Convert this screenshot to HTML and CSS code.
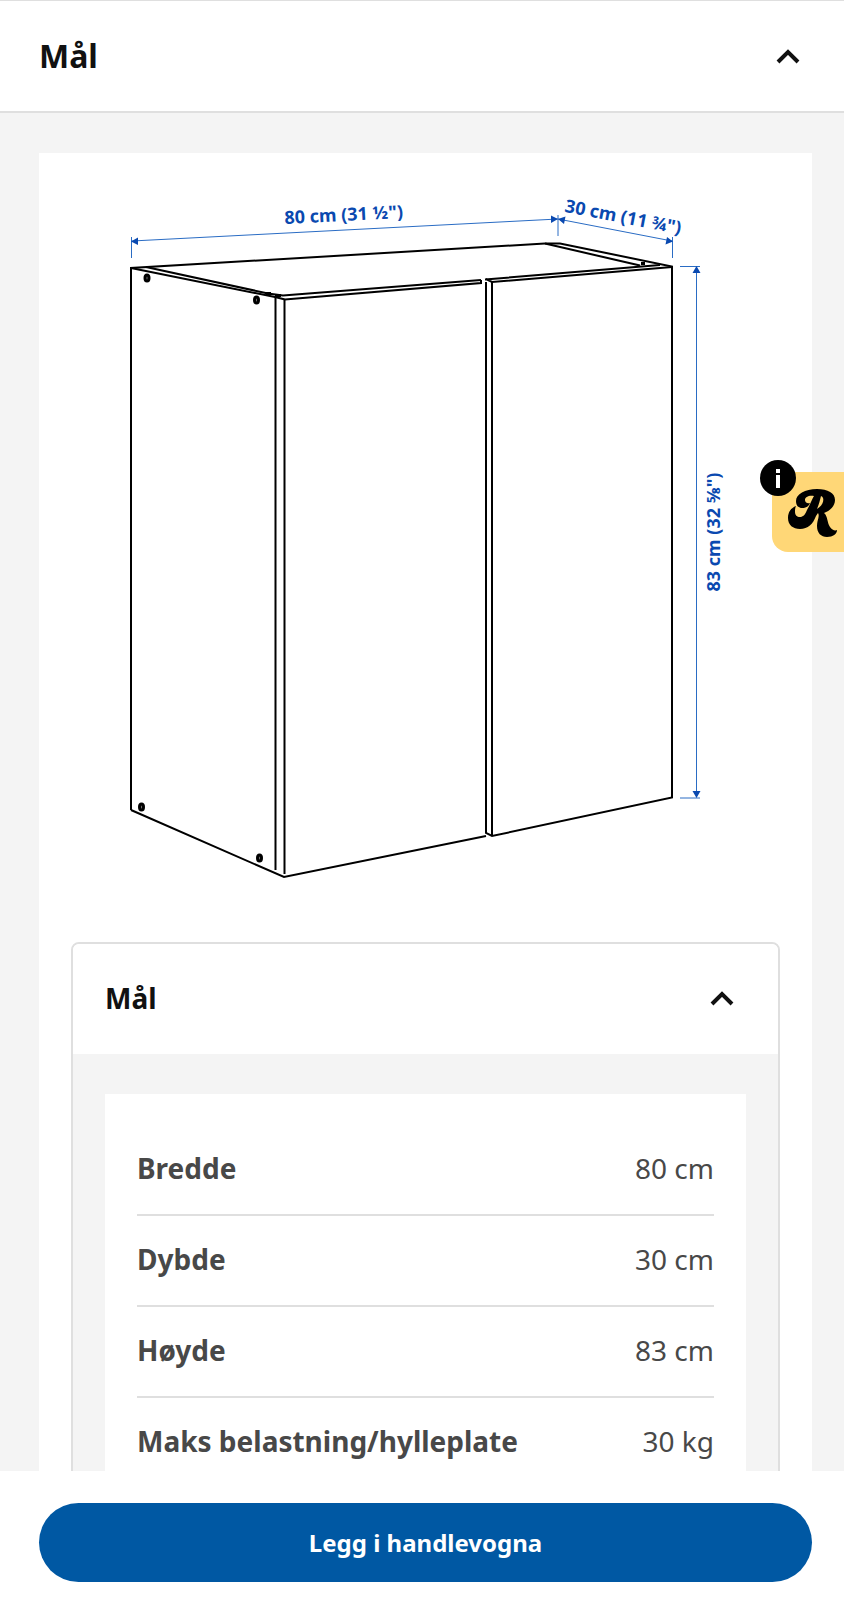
FILE: index.html
```html
<!DOCTYPE html>
<html lang="nn">
<head>
<meta charset="utf-8">
<meta name="viewport" content="width=device-width, initial-scale=1">
<title>Mål</title>
<link rel="stylesheet" href="styles.css">
</head>
<body>
<div class="page">
  <main class="content">
    <h1 class="section-heading">
      <button class="toggle toggle-large" type="button" aria-expanded="true" aria-controls="measurements">
        <span>Mål</span>
        <svg class="chevron" viewBox="0 0 24 16" aria-hidden="true"><path d="M2 14 12 4l10 10"/></svg>
      </button>
    </h1>
    <section class="panel" id="measurements">
      <div class="card">
        <svg class="drawing" viewBox="39 153 773 757" role="img" aria-label="Skap, 80 × 30 × 83 cm">
          <g class="outline">
            <path d="M131 810V268L545 243.500H560L672 266.500V797.500L492 836 486 833V282"/>
            <path d="M131 268 275 297 285 299.500 481 283V280"/>
            <path d="M146 267 268 293.500 283 295.500 481 280"/>
            <path d="M545 243.500 640 265.500"/>
            <path d="M485 279.500 660 265M486 279 492 282 672 267"/>
            <path d="M131 810 284 877 486 836"/>
            <path d="M275.500 297V870M284.500 299V874M492 282V836"/>
          </g>
          <g class="dowels">
            <ellipse cx="147" cy="278" rx="2" ry="3"/>
            <ellipse cx="256.500" cy="300" rx="2" ry="3"/>
            <ellipse cx="141.500" cy="807" rx="2" ry="3"/>
            <ellipse cx="259.500" cy="858" rx="2" ry="3"/>
            <path d="M266 293.500h5M275 295.500h6M641 263.500h4"/>
          </g>
          <g class="dimension-lines">
            <path d="M131.500 237V258M132 241 558 219M558 215V236M558 219 672 241M672.500 237V258M680 266.500H700M680 798H700M696.500 267V797"/>
          </g>
          <g class="arrowheads">
            <path d="M131 241.500 138 237.500V245ZM558 219 551 215.500V223ZM558 219 565.500 216.500 564 224ZM673 241.500 667 237 665.500 244.500ZM696.500 266 692.500 273H700.500ZM696.500 798 692.500 791H700.500Z"/>
          </g>
          <g class="dimension-text">
            <text transform="translate(344 221) rotate(-3)">80 cm (31 ½")</text>
            <text transform="translate(622 223) rotate(11)">30 cm (11 ¾")</text>
            <text transform="translate(720 532) rotate(-90)">83 cm (32 ⅝")</text>
          </g>
        </svg>
        <section class="details">
          <h2 class="section-heading">
            <button class="toggle" type="button" aria-expanded="true" aria-controls="sizes">
              <span>Mål</span>
              <svg class="chevron" viewBox="0 0 24 16" aria-hidden="true"><path d="M2 14 12 4l10 10"/></svg>
            </button>
          </h2>
          <div class="details-body" id="sizes">
            <dl class="sizes">
              <div class="size-row"><dt>Bredde</dt><dd>80 cm</dd></div>
              <div class="size-row"><dt>Dybde</dt><dd>30 cm</dd></div>
              <div class="size-row"><dt>Høyde</dt><dd>83 cm</dd></div>
              <div class="size-row"><dt>Maks belastning/hylleplate</dt><dd>30 kg</dd></div>
            </dl>
          </div>
        </section>
      </div>
    </section>
  </main>
  <footer class="buy-bar">
    <button class="buy" type="button">Legg i handlevogna</button>
  </footer>
  <button class="sticker" type="button" aria-label="Informasjon">
    <svg class="sticker-logo" viewBox="0 0 50 50" aria-hidden="true"><path fill-rule="evenodd" d="M8 18C3 20 0 24 0 30 0 37 5 41 12 41 20 41 25 36 28 28L30 25C32 28 29 32 29 38 29 45 33 49 39 49 45 49 49 46 49 42 47 43 44 42 42 39 39 35 40 28 36 25 42 23 47 18 47 12 47 5 40 1 29 1 17 1 8 6 8 13 8 18 11 20 14 20 18 20 21 18 22 15 19 16 17 14 17 12 17 9 21 7 26 8 24 11 22 17 19 22 17 27 15 29 12 29 9 29 7 27 7 24 7 22 7 20 8 18ZM33 8C37 9 36 17 29 21 31 16 32 12 33 8Z"/></svg>
    <svg class="sticker-info" viewBox="0 0 36 36" aria-hidden="true"><circle cx="18" cy="18" r="18"/><path d="M16 9h4v4h-4zM16 15h4v13h-4z"/></svg>
  </button>
</div>
</body>
</html>
```
FILE: styles.css
```css
*, *::before, *::after { box-sizing: border-box; }

body {
  margin: 0;
  background: #fff;
  color: #111;
  font-family: "Noto Sans", sans-serif;
}

.page {
  display: flex;
  flex-direction: column;
  height: 100vh;
}

.content {
  flex: 1;
  min-height: 0;
  overflow: hidden;
  background: #f4f4f4;
  border-top: 1px solid #dfdfdf;
}

.section-heading {
  margin: 0;
  font-size: 28px;
}

.toggle {
  display: flex;
  align-items: center;
  justify-content: space-between;
  width: 100%;
  padding: 35px 44px 37px 32px;
  border: 0;
  background: #fff;
  color: #111;
  font-family: inherit;
  font-size: 28px;
  font-weight: 700;
  line-height: 38px;
}

.toggle-large {
  padding: 33px 44px 33px 39px;
  border-bottom: 2px solid #dfdfdf;
  font-size: 32px;
  line-height: 44px;
}

.chevron {
  width: 24px;
  height: 16px;
  fill: none;
  stroke: #111;
  stroke-width: 4;
}

.panel { padding: 40px 32px 0 39px; }

.card {
  padding-bottom: 32px;
  background: #fff;
}

.drawing {
  display: block;
  width: 100%;
}

.outline {
  fill: none;
  stroke: #000;
  stroke-width: 2;
}

.dowels {
  fill: #777;
  stroke: #000;
  stroke-width: 3;
}

.dimension-lines {
  fill: none;
  stroke: #2a6cc4;
  stroke-width: 1;
}

.arrowheads { fill: #0a49b0; }

.dimension-text {
  fill: #0a49b0;
  font-size: 18px;
  font-weight: 700;
  text-anchor: middle;
}

.details {
  margin: 32px 32px 0;
  border: 2px solid #dfdfdf;
  border-radius: 8px;
  overflow: hidden;
}

.details-body {
  padding: 40px 32px;
  background: #f4f4f4;
}

.sizes {
  margin: 0;
  padding: 31px 32px;
  background: #fff;
}

.size-row {
  display: flex;
  justify-content: space-between;
  padding: 24px 0 27px;
  border-bottom: 2px solid #dfdfdf;
  color: #484848;
  font-size: 28px;
  line-height: 38px;
}

.size-row:last-child { border-bottom: 0; }

.size-row dt { font-weight: 700; }

.size-row dd { margin: 0; }

.buy-bar {
  padding: 32px 32px 18px 39px;
  background: #fff;
}

.buy {
  display: block;
  width: 100%;
  padding: 22px;
  border: 0;
  border-radius: 40px;
  background: #0058a3;
  color: #fff;
  font-family: inherit;
  font-size: 24px;
  font-weight: 700;
  line-height: 35px;
}

.sticker {
  position: fixed;
  top: 472px;
  right: 0;
  width: 72px;
  height: 80px;
  padding: 16px 6px 14px 16px;
  border: 0;
  border-radius: 0 0 0 16px;
  background: #ffd777;
}

.sticker-logo {
  display: block;
  width: 50px;
  height: 50px;
}

.sticker-info {
  position: absolute;
  top: -12px;
  left: -12px;
  width: 36px;
  height: 36px;
}

.sticker-info path { fill: #fff; }
```
